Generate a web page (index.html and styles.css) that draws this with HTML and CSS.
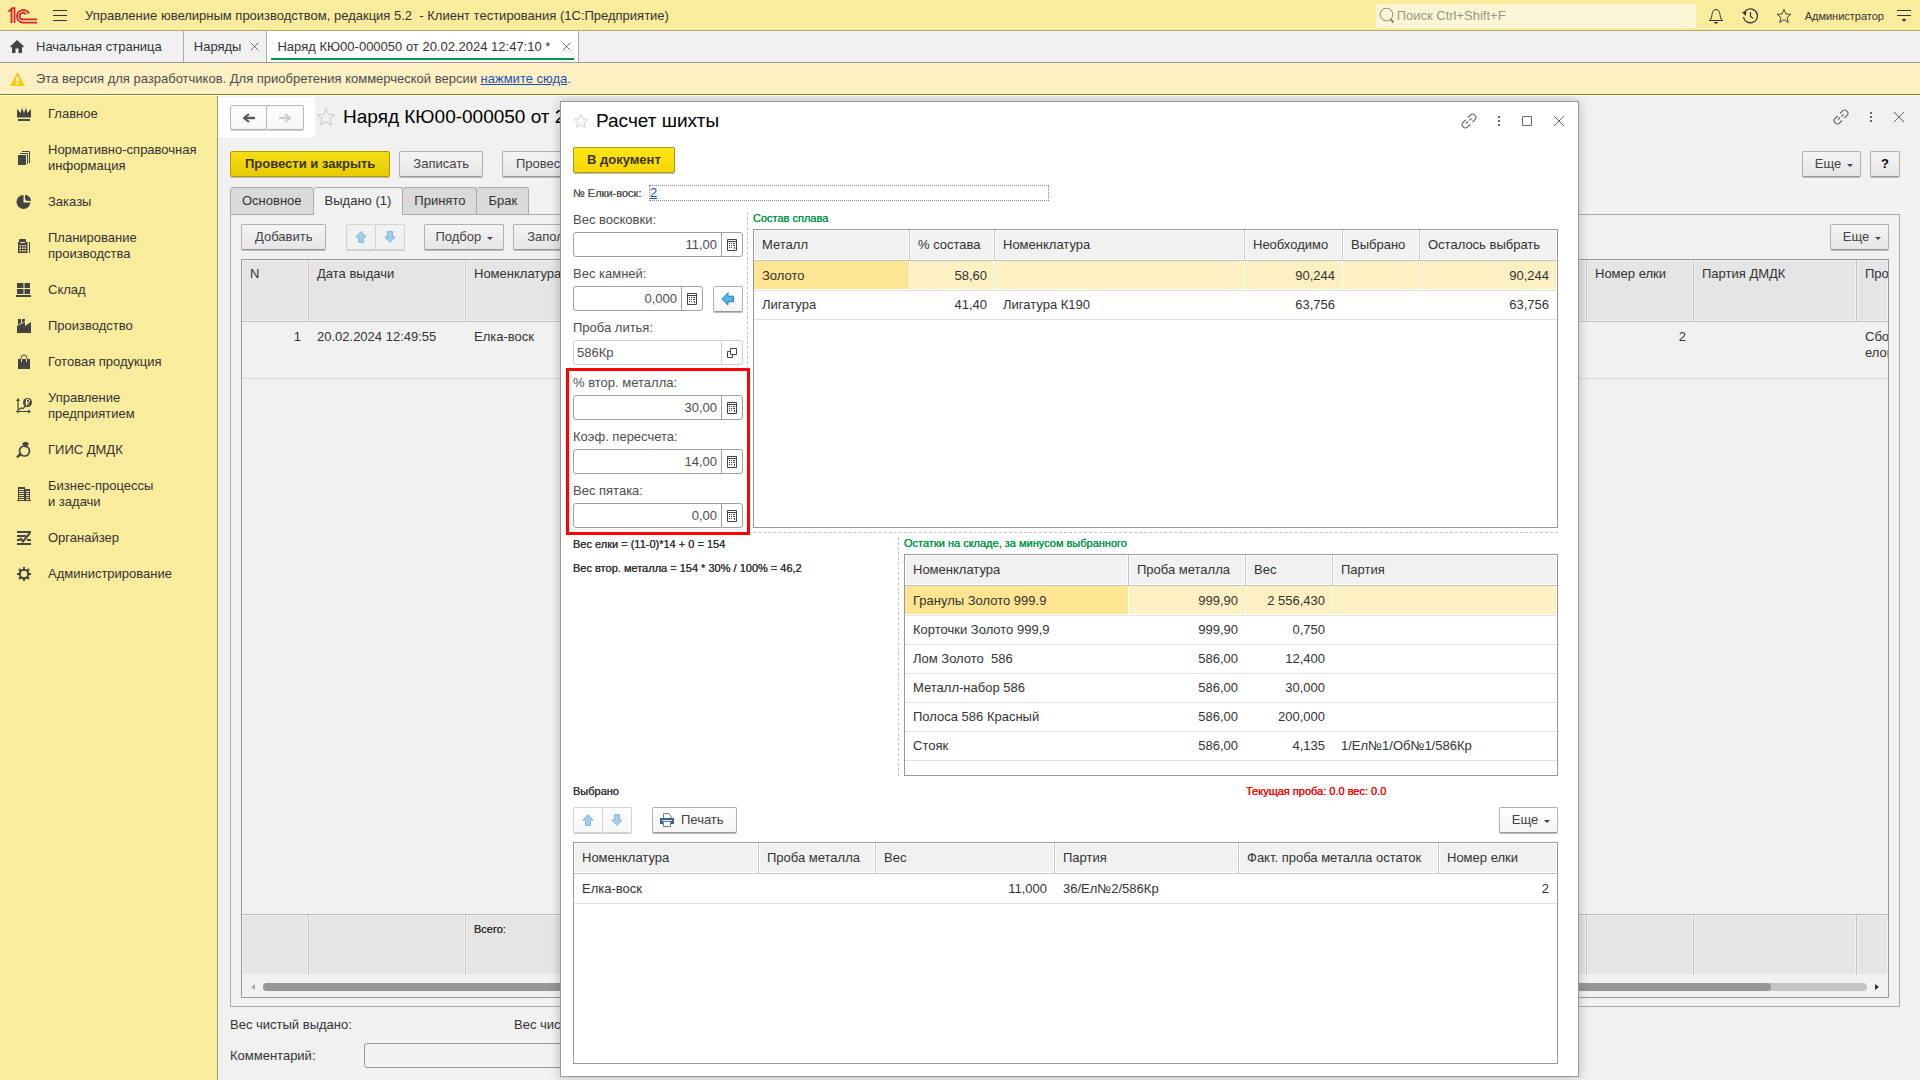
FILE: index.html
```html
<!DOCTYPE html>
<html lang="ru">
<head>
<meta charset="utf-8">
<title>Управление ювелирным производством, редакция 5.2</title>
<link rel="stylesheet" href="styles.css">
</head>
<body>
<svg class="sprite" aria-hidden="true">
  <symbol id="i-star" viewBox="0 0 18 18"><path d="M9 1.500l2.100 5.200 5.600.4-4.300 3.600 1.400 5.500L9 13.200l-4.800 3 1.400-5.500L1.300 7.100l5.600-.4z" fill="none" stroke="currentColor" stroke-linejoin="round"/></symbol>
  <symbol id="i-link" viewBox="0 0 16 16"><g fill="none" stroke="currentColor" stroke-width="1.200"><path d="M7 4.500l2.600-2.600a2.700 2.700 0 0 1 4 0l.5.5a2.700 2.700 0 0 1 0 4L11.500 9M9 11.500l-2.600 2.600a2.700 2.700 0 0 1-4 0l-.5-.5a2.700 2.700 0 0 1 0-4L4.500 7M5 10.500l2-2M8.500 7.500l2-2"/></g></symbol>
  <symbol id="i-dots" viewBox="0 0 4 14"><path d="M1 2h2v2H1zM1 6h2v2H1zM1 10h2v2H1z" fill="currentColor"/></symbol>
  <symbol id="i-x" viewBox="0 0 12 12"><path d="M1 1l10 10M11 1L1 11" fill="none" stroke="currentColor"/></symbol>
  <symbol id="i-up" viewBox="0 0 12 12"><path d="M6 .6l5.200 5.400H8.500v5.500h-5V6H.8z" fill="#9ed1ee" stroke="#8bb6d0"/></symbol>
  <symbol id="i-down" viewBox="0 0 12 12"><path d="M6 11.400L.8 6h2.700V.5h5V6h2.700z" fill="#9ed1ee" stroke="#8bb6d0"/></symbol>
  <symbol id="i-calc" viewBox="0 0 10 12"><path d="M.5.500h9v11h-9zM.5 2.500h9" fill="none" stroke="#444"/><path d="M2 4h1v1H2zM4 4h1v1H4zM6 4h2v1H6zM2 6h1v1H2zM4 6h1v1H4zM6 6h2v1H6zM2 8h1v1H2zM4 8h1v1H4zM7 8h1v2H7z" fill="#444"/></symbol>
  <symbol id="i-fwd" viewBox="0 0 12 10"><path d="M0 5h10" stroke="currentColor" stroke-width="2.400"/><path d="M6 1l5 4-5 4" fill="none" stroke="currentColor" stroke-width="2"/></symbol>
</svg>

<header class="topbar">
  <svg class="logo" viewBox="0 0 30 17"><g fill="none" stroke="#d8232a" stroke-width="1.800"><path d="M.500 4.500l3-2.500v14M3.500 1.200h3V16"/><path d="M21 6.500A6.300 6.300 0 1 0 15 15.600h14"/><path d="M17.800 7.500A3.300 3.300 0 1 0 15 12.400h14"/></g></svg>
  <button class="icon-btn burger" aria-label="Меню"><svg viewBox="0 0 14 13"><path d="M0 1.500h14M0 6.500h14M0 11.500h14" stroke="#333"/></svg></button>
  <div class="app-title">Управление ювелирным производством, редакция 5.2 &nbsp;- Клиент тестирования (1С:Предприятие)</div>
  <label class="search"><svg viewBox="0 0 16 17"><circle cx="7.500" cy="7.500" r="6.300" fill="none" stroke="#8d8a70"/><path d="M11.500 12l3 3.500" stroke="#8d8a70" stroke-width="2"/></svg><input type="text" placeholder="Поиск Ctrl+Shift+F" aria-label="Поиск"></label>
  <div class="top-icons">
    <button class="icon-btn" aria-label="Уведомления"><svg viewBox="0 0 16 16"><path d="M1.500 12.500h13c-2.500-2-2-5-3-8C11 2.500 9.500 1.500 8 1.500S5 2.500 4.500 4.500c-1 3-.5 6-3 8z" fill="none" stroke="#333"/><path d="M5.500 14h5L8 16z" fill="#333"/></svg></button>
    <button class="icon-btn" aria-label="История"><svg viewBox="0 0 16 16"><path d="M2 5a7 7 0 1 1-.5 4M8.500 4v4.500l2.500 2" fill="none" stroke="#333" stroke-width="1.200"/><path d="M0 4l4.500-.500L3.500 8z" fill="#333"/></svg></button>
    <button class="icon-btn" aria-label="Избранное"><svg viewBox="0 0 18 18" color="#333"><use href="#i-star"/></svg></button>
  </div>
  <a class="user" href="#">Администратор</a>
  <button class="icon-btn burger" aria-label="Настройки"><svg viewBox="0 0 14 13"><path d="M0 1.500h14M0 6.500h14" stroke="#333"/><path d="M4.500 10h5L7 13z" fill="#333"/></svg></button>
</header>

<nav class="tabs">
  <a class="tab tab-home" href="#"><svg viewBox="0 0 14 13"><path d="M7 0l7 6.500-1 1-1-.8V13H8.500V8.500h-3V13H2V6.700l-1 .8-1-1z" fill="#444"/></svg>Начальная страница</a>
  <a class="tab" href="#">Наряды<svg class="close" viewBox="0 0 12 12"><use href="#i-x"/></svg></a>
  <a class="tab tab-active" href="#">Наряд КЮ00-000050 от 20.02.2024 12:47:10 *<svg class="close" viewBox="0 0 12 12"><use href="#i-x"/></svg></a>
</nav>

<div class="notice">
  <svg viewBox="0 0 15 14"><path d="M7.500 0L15 14H0z" fill="#fbc816"/><path d="M6.500 5h2v4.500h-2zM6.500 10.500h2v2h-2z" fill="#fff"/></svg>
  <span>Эта версия для разработчиков. Для приобретения коммерческой версии <a href="#">нажмите сюда</a>.</span>
</div>

<div class="workspace">
  <nav class="sidebar">
    <a href="#"><svg viewBox="0 0 16 16"><path d="M1 3l3.500 4L6 2l2 5 2-5 1.500 5L15 3v8.500H1zM2 13h12v2H2z"/></svg>Главное</a>
    <a href="#"><svg viewBox="0 0 16 16"><path d="M2 5h8v10H2z"/><path d="M4 3.500h7.500V14M6 1.500h7.500V13" fill="none" stroke="#444"/></svg>Нормативно-справочная<br>информация</a>
    <a href="#"><svg viewBox="0 0 16 16"><path d="M7.500 1a7 7 0 1 0 7 7.500h-7z"/><path d="M9 0.800a7 7 0 0 1 6 6.200l-4.500-.2L9 5z"/></svg>Заказы</a>
    <a href="#"><svg viewBox="0 0 16 16"><path d="M3.500 1.500h6v4h-6zM13.500 4v11" fill="none" stroke="#444"/><path fill-rule="evenodd" d="M2 4h9.500v11H2zM4 2h5v3H4zM3.500 7v1.500H5V7zM6 7v1.500h1.500V7zM8.500 7v1.500H10V7zM3.500 9.500V11H5V9.500zM6 9.500V11h1.500V9.500zM8.500 9.500V11H10V9.500zM3.500 12v1.500H5V12zM6 12v1.500h1.500V12zM8.500 12v1.500H10V12z"/></svg>Планирование<br>производства</a>
    <a href="#"><svg viewBox="0 0 16 16"><path d="M1 1h6.500v5H1zM8.500 1H14v5H8.500zM1 7h6.500v5H1zM8.500 7H14v5H8.500zM0 13h15v2H0z"/></svg>Склад</a>
    <a href="#"><svg viewBox="0 0 16 16"><path d="M2 1h3v4L2 7zM6 1h3v2L6 5zM1 8l8-4v4l6-4v11H1z"/></svg>Производство</a>
    <a href="#"><svg viewBox="0 0 16 16"><path d="M2 5h12v10H2z"/><path d="M5 5V4a3 3 0 0 1 6 0v1" fill="none" stroke="#444"/><path d="M5.500 5v3M10.500 5v3" stroke="#faec9d"/></svg>Готовая продукция</a>
    <a href="#"><svg viewBox="0 0 16 16"><path d="M2 1v14M0 13.500h14M3 12l2-2 2 .5 3-3" fill="none" stroke="#444" stroke-width="1.200"/><path d="M0 3l2-3 2 3zM12 11.500l3 2-3 2z"/><circle cx="11.500" cy="4.500" r="4.500"/><path d="M10.500 7.500v-6h1.500a1.500 1.500 0 0 1 0 3h-2.500M9.500 6H13" fill="none" stroke="#faec9d"/></svg>Управление<br>предприятием</a>
    <a href="#"><svg viewBox="0 0 16 16"><circle cx="8.500" cy="9" r="5" fill="none" stroke="#444" stroke-width="1.700"/><path d="M8 0h3l2 2-3.500 4L6 2zM0 15l3.500-4 2 2L2 16z"/></svg>ГИИС ДМДК</a>
    <a href="#"><svg viewBox="0 0 16 16"><path fill-rule="evenodd" d="M2 1h7v2h5v11h1v1H1v-1h1zM3 3v1h5V3zM3 5v1h5V5zM3 7v1h5V7zM3 9v1h5V9zM3 11v1h5v-1zM3 13v1h5v-1zM10 5v1h3V5zM10 7v1h3V7zM10 9v1h3V9zM10 11v1h3v-1zM10 13v1h3v-1z"/></svg>Бизнес-процессы<br>и задачи</a>
    <a href="#"><svg viewBox="0 0 16 16"><path d="M1 1h14v2H1zM1 5h9v2H1zM1 9h3v2H1zM11 9h4v2h-4zM1 13h14v2H1z"/><path d="M4 8l3 3.500L14 3" fill="none" stroke="#444" stroke-width="2"/></svg>Органайзер</a>
    <a href="#"><svg viewBox="0 0 16 16"><circle cx="8" cy="8" r="4.200" fill="none" stroke="#444" stroke-width="2"/><path d="M8 1v3M8 12v3M1 8h3M12 8h3M3 3l2 2M11 11l2 2M13 3l-2 2M5 11l-2 2" stroke="#444" stroke-width="2"/></svg>Администрирование</a>
  </nav>

  <main class="form">
    <div class="form-head">
      <div class="nav-patch">
        <div class="pair">
          <button aria-label="Назад"><svg class="flip" viewBox="0 0 12 10" color="#555"><use href="#i-fwd"/></svg></button><button aria-label="Вперед"><svg viewBox="0 0 12 10" color="#ccc"><use href="#i-fwd"/></svg></button>
        </div>
      </div>
      <svg class="star-big" viewBox="0 0 18 18"><use href="#i-star"/></svg>
      <h1>Наряд КЮ00-000050 от 20.02.2024 12:47:10 *</h1>
      <div class="win-icons">
        <button class="icon-btn" aria-label="Ссылка"><svg class="w16" viewBox="0 0 16 16"><use href="#i-link"/></svg></button>
        <button class="icon-btn" aria-label="Действия"><svg class="w4" viewBox="0 0 4 14"><use href="#i-dots"/></svg></button>
        <button class="icon-btn" aria-label="Закрыть"><svg class="w12" viewBox="0 0 12 12"><use href="#i-x"/></svg></button>
      </div>
    </div>

    <div class="commands">
      <button class="btn btn-main">Провести и закрыть</button>
      <button class="btn">Записать</button>
      <button class="btn btn-apart">Провести</button>
      <span class="grow"></span>
      <button class="btn btn-more">Еще<i class="caret"></i></button>
      <button class="btn btn-help">?</button>
    </div>

    <div class="pages">
      <button class="page">Основное</button>
      <button class="page page-active">Выдано (1)</button>
      <button class="page">Принято</button>
      <button class="page">Брак</button>
    </div>

    <section class="panel">
      <div class="panel-bar">
        <button class="btn">Добавить</button>
        <div class="pair pair-soft">
          <button aria-label="Вверх"><svg viewBox="0 0 12 12"><use href="#i-up"/></svg></button><button aria-label="Вниз"><svg viewBox="0 0 12 12"><use href="#i-down"/></svg></button>
        </div>
        <button class="btn btn-pick">Подбор<i class="caret"></i></button>
        <button class="btn">Заполнить</button>
        <span class="grow"></span>
        <button class="btn btn-more">Еще<i class="caret"></i></button>
      </div>
      <div class="orders">
        <table class="grid grid-orders">
          <colgroup><col class="c-n"><col class="c-date"><col><col class="c-tree"><col class="c-party"><col class="c-cut"></colgroup>
          <thead><tr><th>N</th><th>Дата выдачи</th><th>Номенклатура</th><th>Номер елки</th><th>Партия ДМДК</th><th>Процесс</th></tr></thead>
          <tbody><tr><td class="num">1</td><td>20.02.2024 12:49:55</td><td>Елка-воск</td><td class="num">2</td><td></td><td>Сборка<br>елок</td></tr></tbody>
        </table>
        <div class="grow"></div>
        <table class="grid grid-orders grid-total">
          <colgroup><col class="c-n"><col class="c-date"><col><col class="c-tree"><col class="c-party"><col class="c-cut"></colgroup>
          <tbody><tr><th></th><th></th><th>Всего:</th><th></th><th></th><th></th></tr></tbody>
        </table>
        <div class="hscroll"><i class="arr arr-left"></i><div class="track"><div class="thumb"></div></div><i class="arr arr-right"></i></div>
      </div>
    </section>

    <div class="weights"><span>Вес чистый выдано:</span><span>Вес чистый принято:</span></div>
    <div class="comment"><label for="comment">Комментарий:</label><input id="comment" type="text"></div>

    <div class="dialog" role="dialog" aria-labelledby="dlg-title">
      <div class="dlg-head">
        <svg class="star-small" viewBox="0 0 18 18"><use href="#i-star"/></svg>
        <h2 id="dlg-title">Расчет шихты</h2>
        <div class="win-icons">
          <button class="icon-btn" aria-label="Ссылка"><svg class="w16" viewBox="0 0 16 16"><use href="#i-link"/></svg></button>
          <button class="icon-btn" aria-label="Действия"><svg class="w4" viewBox="0 0 4 14"><use href="#i-dots"/></svg></button>
          <button class="icon-btn" aria-label="Развернуть"><svg class="w12" viewBox="0 0 12 12"><path d="M1.500 1.500h9v9h-9z" fill="none" stroke="currentColor"/></svg></button>
          <button class="icon-btn" aria-label="Закрыть"><svg class="w12" viewBox="0 0 12 12"><use href="#i-x"/></svg></button>
        </div>
      </div>
      <div class="dlg-cmd"><button class="btn btn-main">В документ</button></div>
      <div class="tree-no"><span class="small">№ Елки-воск:</span><div class="link-box"><a href="#">2</a></div></div>

      <div class="upper">
        <div class="fields">
          <div class="field"><label for="f1">Вес восковки:</label><div class="box"><input id="f1" type="text" value="11,00"><button aria-label="Калькулятор"><svg viewBox="0 0 10 12"><use href="#i-calc"/></svg></button></div></div>
          <div class="field"><label for="f2">Вес камней:</label><div class="with-btn"><div class="box"><input id="f2" type="text" value="0,000"><button aria-label="Калькулятор"><svg viewBox="0 0 10 12"><use href="#i-calc"/></svg></button></div><button class="btn btn-left" aria-label="Перенести"><svg viewBox="0 0 14 14"><path d="M.8 7L7 .8v3.400h5.500v5.600H7v3.400z" fill="#4db4ee" stroke="#3a7fae"/></svg></button></div></div>
          <div class="field"><label for="f3">Проба литья:</label><div class="box box-soft"><input id="f3" type="text" value="586Кр"><button aria-label="Открыть"><svg viewBox="0 0 10 10"><path d="M3.500.500h6v6h-6zM3 3.500H.500v6h5V7" fill="none" stroke="#444"/></svg></button></div></div>
          <div class="marked">
            <div class="field"><label for="f4">% втор. металла:</label><div class="box"><input id="f4" type="text" value="30,00"><button aria-label="Калькулятор"><svg viewBox="0 0 10 12"><use href="#i-calc"/></svg></button></div></div>
            <div class="field"><label for="f5">Коэф. пересчета:</label><div class="box"><input id="f5" type="text" value="14,00"><button aria-label="Калькулятор"><svg viewBox="0 0 10 12"><use href="#i-calc"/></svg></button></div></div>
            <div class="field"><label for="f6">Вес пятака:</label><div class="box"><input id="f6" type="text" value="0,00"><button aria-label="Калькулятор"><svg viewBox="0 0 10 12"><use href="#i-calc"/></svg></button></div></div>
          </div>
        </div>
        <div class="split-v"></div>
        <div class="block">
          <h3>Состав сплава</h3>
          <div class="frame">
            <table class="grid">
              <colgroup><col class="a-metal"><col class="a-pct"><col><col class="a-need"><col class="a-sel"><col class="a-rest"></colgroup>
              <thead><tr><th>Металл</th><th>% состава</th><th>Номенклатура</th><th>Необходимо</th><th>Выбрано</th><th>Осталось выбрать</th></tr></thead>
              <tbody>
                <tr class="current"><td>Золото</td><td class="num">58,60</td><td></td><td class="num">90,244</td><td></td><td class="num">90,244</td></tr>
                <tr><td>Лигатура</td><td class="num">41,40</td><td>Лигатура К190</td><td class="num">63,756</td><td></td><td class="num">63,756</td></tr>
              </tbody>
            </table>
          </div>
        </div>
      </div>
      <div class="split-h"></div>
      <div class="lower">
        <div class="notes"><p class="small">Вес елки = (11-0)*14 + 0 = 154</p><p class="small">Вес втор. металла = 154 * 30% / 100% = 46,2</p></div>
        <div class="split-v"></div>
        <div class="block">
          <h3>Остатки на складе, за минусом выбранного</h3>
          <div class="frame frame-stock">
            <table class="grid">
              <colgroup><col class="s-name"><col class="s-probe"><col class="s-weight"><col></colgroup>
              <thead><tr><th>Номенклатура</th><th>Проба металла</th><th>Вес</th><th>Партия</th></tr></thead>
              <tbody>
                <tr class="current"><td>Гранулы Золото 999.9</td><td class="num">999,90</td><td class="num">2 556,430</td><td></td></tr>
                <tr><td>Корточки Золото 999,9</td><td class="num">999,90</td><td class="num">0,750</td><td></td></tr>
                <tr><td>Лом Золото &nbsp;586</td><td class="num">586,00</td><td class="num">12,400</td><td></td></tr>
                <tr><td>Металл-набор 586</td><td class="num">586,00</td><td class="num">30,000</td><td></td></tr>
                <tr><td>Полоса 586 Красный</td><td class="num">586,00</td><td class="num">200,000</td><td></td></tr>
                <tr><td>Стояк</td><td class="num">586,00</td><td class="num">4,135</td><td>1/Ел№1/Об№1/586Кр</td></tr>
              </tbody>
            </table>
          </div>
        </div>
      </div>
      <div class="chosen-head"><span class="small">Выбрано</span><span class="small current-probe">Текущая проба: 0.0 вес: 0.0</span></div>
      <div class="chosen-bar">
        <div class="pair pair-soft">
          <button aria-label="Вверх"><svg viewBox="0 0 12 12"><use href="#i-up"/></svg></button><button aria-label="Вниз"><svg viewBox="0 0 12 12"><use href="#i-down"/></svg></button>
        </div>
        <button class="btn btn-print"><svg viewBox="0 0 14 14"><path d="M3.500 5V.500h5l2.500 2.500V5" fill="#fff" stroke="#6a7f99"/><path d="M0 5h14v6H0z" fill="#3d6492"/><path d="M2 7.500h10" stroke="#dbe6f2"/><path d="M3.500 8.500h7v5h-7z" fill="#fff" stroke="#6a7f99"/></svg>Печать</button>
        <span class="grow"></span>
        <button class="btn btn-more">Еще<i class="caret"></i></button>
      </div>
      <div class="frame frame-chosen">
        <table class="grid">
          <colgroup><col class="p-name"><col class="s-probe"><col class="p-weight"><col class="p-party"><col class="p-fact"><col></colgroup>
          <thead><tr><th>Номенклатура</th><th>Проба металла</th><th>Вес</th><th>Партия</th><th>Факт. проба металла остаток</th><th>Номер елки</th></tr></thead>
          <tbody><tr class="first"><td>Елка-воск</td><td></td><td class="num">11,000</td><td>36/Ел№2/586Кр</td><td></td><td class="num">2</td></tr></tbody>
        </table>
      </div>
    </div>
  </main>
</div>
</body>
</html>
```
FILE: styles.css
```css
* { box-sizing: border-box; }
body {
  margin: 0;
  min-height: 100vh;
  display: flex;
  flex-direction: column;
  font: 13px/16px "Liberation Sans", Arial, sans-serif;
  color: #333;
  background: #f1f1f1;
}
button, input { font: inherit; color: inherit; }
button { cursor: pointer; padding: 0; }
a { color: inherit; text-decoration: none; }
svg { display: block; flex: none; }
h1, h2, h3, p { margin: 0; }
.sprite { position: absolute; width: 0; height: 0; }
.grow { flex: 1; }
.icon-btn { border: 0; background: none; display: flex; color: #666; }
.icon-btn svg { width: 16px; height: 16px; }

/* application bar */
.topbar {
  height: 31px;
  display: flex;
  align-items: center;
  padding: 1px 9px 0 8px;
  background: #faec9d;
  border-bottom: 1px solid #b3aa72;
}
.logo { width: 30px; height: 17px; }
.icon-btn.burger svg { width: 14px; height: 13px; }
.topbar .logo + .burger { margin-left: 15px; }
.app-title { margin-left: 18px; flex: 1; white-space: nowrap; }
.search {
  width: 320px;
  height: 24px;
  display: flex;
  align-items: center;
  gap: 2px;
  padding-left: 3px;
  border-radius: 2px;
  background: #fdf6d6;
}
.search svg { width: 16px; height: 17px; }
.search input { flex: 1; min-width: 0; border: 0; padding: 0; background: none; outline: 0; }
.search input::placeholder { color: #9a977f; opacity: 1; }
.top-icons { display: flex; gap: 18px; margin: 0 13px 0 12px; }
.user { font-size: 11px; margin-right: 13px; }

/* open windows */
.tabs { display: flex; height: 32px; background: #f1f1f1; border-bottom: 1px solid #999; }
.tab {
  display: flex;
  align-items: center;
  padding: 0 7px 0 10px;
  border-right: 1px solid #aaa;
  white-space: nowrap;
}
.tab-home { padding: 0 21px 0 10px; gap: 12px; }
.tab-home svg { width: 14px; height: 13px; }
.tab .close { width: 9px; height: 9px; margin-left: 9px; color: #444; }
.tab-active .close { margin-left: 12px; }
.tab-active { background: #fff; box-shadow: inset 4px 0 #fff, inset -4px 0 #fff, inset 0 -2px #fff, inset 0 -4px #009a4e; }

.notice {
  height: 32px;
  display: flex;
  align-items: center;
  gap: 11px;
  padding-left: 10px;
  background: #fdf1c4;
  border-bottom: 1px solid #96790f;
  color: #4d4d4d;
}
.notice svg { width: 15px; height: 14px; }
.notice a, .link-box a { color: #1d4fb0; text-decoration: underline; }

.workspace { flex: 1; display: flex; border-top: 1px solid #fff; }
.sidebar { width: 218px; background: #faec9d; border-right: 1px solid #a09a72; }
.sidebar a { display: flex; align-items: center; gap: 16px; padding: 10px 0 10px 16px; white-space: nowrap; }
.sidebar svg { width: 16px; height: 16px; fill: #444; }
.sidebar a { color: #333; }

/* order form */
.form {
  position: relative;
  flex: 1;
  min-width: 0;
  display: flex;
  flex-direction: column;
  padding: 1px 20px 12px 12px;
  overflow: hidden;
}
.form-head { display: flex; align-items: center; height: 40px; margin: 0 -10px 0 -12px; }
.nav-patch { width: 97px; height: 40px; padding: 8px 0 0 12px; background: #fff; }
.pair { display: flex; }
.pair button {
  width: 37px;
  height: 25px;
  display: flex;
  align-items: center;
  justify-content: center;
  border: 1px solid #b8b8b8;
  border-radius: 2px;
  background: linear-gradient(#fff, #f6f6f6);
  box-shadow: 0 1px 0 #ccc;
}
.pair button + button { margin-left: -1px; width: 38px; }
.pair svg { width: 12px; height: 10px; }
.flip { transform: scaleX(-1); }
.pair-soft button, .pair-soft button + button { width: 30px; height: 26px; border-color: #d3d3d3; }
.pair-soft svg { width: 12px; height: 12px; }
.panel .pair-soft button { background: #f1f1f1; }
.star-big { width: 20px; height: 20px; color: #ccc; margin: 0 7px 0 1px; }
h1, h2 { font-size: 19px; line-height: 24px; font-weight: 400; color: #000; white-space: nowrap; }
.win-icons { display: flex; align-items: center; gap: 20px; margin-left: auto; padding-right: 5px; }
.icon-btn .w4 { width: 4px; height: 14px; }
.icon-btn .w12 { width: 12px; height: 12px; }
.icon-btn .w16 { width: 16px; height: 16px; }

.btn {
  height: 26px;
  padding: 0 13px;
  border: 1px solid #b0b0b0;
  border-bottom-color: #999;
  border-radius: 2px;
  background: linear-gradient(#fff, #f4f4f4);
  box-shadow: 0 1px 0 #bbb;
  color: #444;
  white-space: nowrap;
}
.form > .commands .btn, .panel .btn { background: linear-gradient(#f4f4f4, #e6e6e6); }
.btn.btn-main, .form > .commands .btn-main {
  font-weight: 700;
  color: #3b3517;
  border-color: #b09a00;
  background: linear-gradient(#ffe619, #f7d600);
}
.form > .commands .btn-main { padding: 0 14px; background: linear-gradient(#f5dd17, #e8cb00); }
.caret { display: inline-block; border: 3px solid transparent; border-top-color: #444; border-bottom: 0; margin-left: 6px; vertical-align: 1px; }
.btn.btn-more { width: 59px; padding: 0 5px 0 10px; }
.form > .commands { display: flex; gap: 9px; margin-top: 14px; }
.btn-apart { margin-left: 10px; }
.form > .commands .btn-help { width: 30px; padding: 0; color: #000; font-weight: 700; }

.pages { display: flex; height: 28px; margin: 10px 0 -1px; }
.page {
  padding: 0 11px;
  border: 1px solid #aaa;
  border-left-width: 0;
  border-radius: 3px 3px 0 0;
  background: #dadada;
}
.page:first-child { border-left-width: 1px; }
.page-active { position: relative; background: #f1f1f1; border-bottom-color: #f1f1f1; }

.panel { flex: 1; display: flex; flex-direction: column; padding: 9px 10px 8px; border: 1px solid #aaa; }
.panel-bar { display: flex; }
.panel-bar .pair { margin: 0 19px 0 20px; }
.panel-bar .btn-pick { margin-right: 9px; padding: 0 10px; }
.orders { flex: 1; display: flex; flex-direction: column; margin-top: 9px; border: 1px solid #999; overflow: hidden; }

/* data tables */
.grid { width: 100%; table-layout: fixed; border-collapse: separate; border-spacing: 0; }
.grid th {
  height: 31px;
  padding: 0 4px 0 8px;
  text-align: left;
  font-weight: 400;
  background: #f1f1f1;
  border-right: 1px solid #c4c4c4;
  border-bottom: 1px solid #c4c4c4;
  box-shadow: inset 0 0 0 1px #fff;
  white-space: nowrap;
  overflow: hidden;
}
.grid td { height: 29px; padding: 0 8px; border-bottom: 1px solid #e2e2e2; white-space: nowrap; overflow: hidden; }
.grid th:last-child { border-right: 0; }
.grid .num { text-align: right; }
.grid .current td, .grid .first td { height: 30px; }
.current td { background: #fdf1c4; border-right: 1px solid #fff; box-shadow: inset 0 -1px #fff; }
.grid .current td.num { padding-right: 7px; }
.current td:first-child { background: #fee591; }
.grid-orders th { height: 62px; padding-top: 6px; vertical-align: top; background: #e5e5e5; box-shadow: inset 0 0 0 1px #f1f1f1; }
.grid-orders td { height: 57px; padding-top: 7px; vertical-align: top; border-color: #d8d8d8; }
.grid-total th { height: 61px; border-top: 1px solid #bbb; border-bottom: 0; font-size: 11px; text-shadow: 0 0 currentColor; }
.c-n { width: 67px; }
.c-date { width: 157px; }
.c-tree { width: 107px; }
.c-party { width: 163px; }
.c-cut { width: 31px; }
.hscroll { display: flex; align-items: center; gap: 8px; height: 22px; padding: 2px 9px 0; }
.track { flex: 1; height: 8px; border-radius: 4px; background: #c4c4c4; }
.thumb { width: 94%; height: 8px; border-radius: 4px; background: #969696; }
.arr { border: 3px solid transparent; }
.arr-left { border-right: 4px solid #aaa; border-left: 0; }
.arr-right { border-left: 4px solid #333; border-right: 0; }

.weights { display: flex; margin-top: 10px; }
.weights span { width: 284px; }
.comment { display: flex; align-items: center; margin-top: 10px; }
.comment label { width: 134px; }
.comment input { flex: 0 1 900px; height: 25px; border: 1px solid #999; border-radius: 3px; background: #f1f1f1; }

/* floating window */
.dialog {
  position: absolute;
  inset: 5px 341px 3px 342px;
  display: flex;
  flex-direction: column;
  padding: 0 20px 12px 12px;
  background: #fff;
  border: 1px solid #999;
  box-shadow: 0 0 10px rgba(0, 0, 0, .25);
}
.dlg-head { display: flex; align-items: center; height: 38px; margin-right: -13px; }
.star-small { width: 16px; height: 16px; color: #ccc; margin-right: 7px; }
.dlg-head .win-icons { padding-right: 6px; }
.dlg-cmd { margin-top: 7px; display: flex; }
.tree-no { display: flex; align-items: center; gap: 8px; margin-top: 12px; height: 16px; }
.tree-no .small { width: 68px; color: #555; }
.link-box { width: 400px; border: 1px dotted #888; line-height: 14px; }
.small, h3 { font-size: 11px; font-weight: 400; line-height: 14px; white-space: nowrap; text-shadow: 0 0 currentColor; }
h3 { color: #009646; line-height: 13px; margin-bottom: 4px; }

.upper { display: grid; grid-template-columns: 170px 10px 1fr; margin-top: 11px; }
.lower { display: grid; grid-template-columns: 321px 10px 1fr; margin-top: 4px; }
.split-v { margin: 0 4px; border-left: 1px dashed #c4c4c4; }
.split-h { margin-top: 4px; border-top: 1px dashed #c4c4c4; }
.fields, .marked { display: flex; flex-direction: column; gap: 9px; }
.field { display: flex; flex-direction: column; gap: 5px; color: #4d4d4d; }
.field label { line-height: 15px; }
.box { display: flex; flex: 1; min-width: 0; height: 25px; min-height: 25px; border: 1px solid #a0a0a0; border-radius: 3px; background: #fff; }
.box input { flex: 1; min-width: 0; border: 0; padding: 0 4px; background: none; text-align: right; outline: 0; }
.box button { width: 21px; border: 0; border-left: 1px solid #a0a0a0; background: none; display: flex; align-items: center; justify-content: center; }
.box button svg { width: 10px; height: 12px; }
.box-soft, .box-soft button { border-color: #d0d0d0; }
.box-soft input { text-align: left; padding: 0 3px; }
.box-soft button svg { height: 10px; }
.with-btn { display: flex; gap: 10px; height: 25px; }
.btn-left { width: 30px; padding: 0; display: flex; align-items: center; justify-content: center; }
.btn-left svg { width: 14px; height: 14px; }
.marked { position: relative; margin-top: 1px; }
.marked::after { content: ""; position: absolute; inset: -7px -7px -7px; border: 3px solid #f00; pointer-events: none; }

.block { display: flex; flex-direction: column; min-width: 0; }
.frame { flex: 1; border: 1px solid #999; background: #fff; overflow: hidden; }
.frame-stock { min-height: 222px; }
.notes { display: flex; flex-direction: column; gap: 10px; }
.a-metal { width: 156px; }
.a-pct { width: 85px; }
.a-need { width: 98px; }
.a-sel { width: 77px; }
.a-rest { width: 137px; }
.s-name { width: 224px; }
.s-probe { width: 117px; }
.s-weight { width: 87px; }
.p-name { width: 185px; }
.p-weight { width: 179px; }
.p-party { width: 184px; }
.p-fact { width: 200px; }
.chosen-head { display: flex; margin-top: 8px; }
.chosen-head .small { flex: none; }
.chosen-head .current-probe { margin-left: auto; width: 312px; color: #f00; }
.chosen-bar { display: flex; margin-top: 9px; }
.chosen-bar .pair { margin-right: 20px; }
.btn-print { display: flex; align-items: center; gap: 7px; padding: 0 12px 0 7px; }
.btn-print svg { width: 14px; height: 14px; }
.frame-chosen { margin-top: 9px; }
```
